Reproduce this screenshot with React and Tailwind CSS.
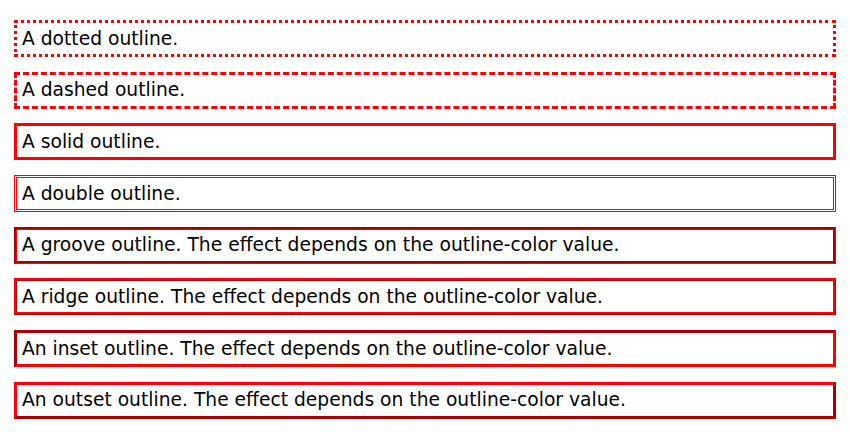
import React from 'react';

const rows = [
  { text: 'A dotted outline.', style: '[outline:3px_dotted_#ff0000]' },
  { text: 'A dashed outline.', style: '[outline:3px_dashed_#ff0000]' },
  { text: 'A solid outline.', style: '[outline:3px_solid_#ff0000]' },
  { text: 'A double outline.', style: '[outline:3px_double_#ff0000]' },
  { text: 'A groove outline. The effect depends on the outline-color value.', style: '[outline:3px_groove_#ff0000]' },
  { text: 'A ridge outline. The effect depends on the outline-color value.', style: '[outline:3px_ridge_#ff0000]' },
  { text: 'An inset outline. The effect depends on the outline-color value.', style: '[outline:3px_inset_#ff0000]' },
  { text: 'An outset outline. The effect depends on the outline-color value.', style: '[outline:3px_outset_#ff0000]' },
];

export default function App() {
  return (
    <div className="w-[850px] h-[432px] bg-white px-[17px] pt-[23px] flex flex-col gap-[20.7px] [font-family:'DejaVu_Sans',sans-serif] text-black">
      {rows.map((row) => (
        <p
          key={row.text}
          className={`${row.style} h-[31px] flex items-center pl-[5px] pt-px text-[18.7px] leading-none`}
        >
          {row.text}
        </p>
      ))}
    </div>
  );
}
